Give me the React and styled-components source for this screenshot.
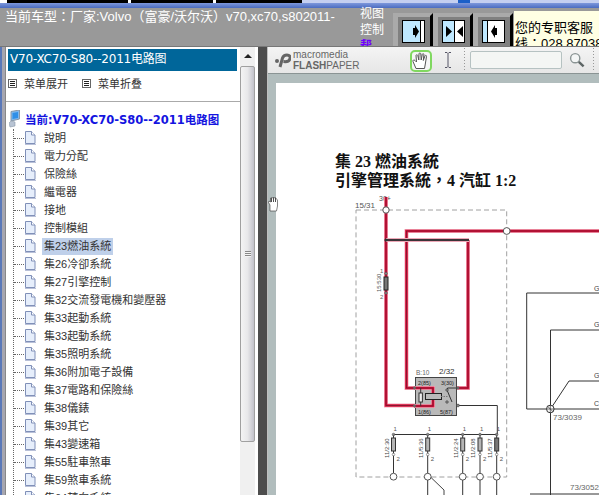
import styled, { createGlobalStyle } from 'styled-components';

const GlobalStyle = createGlobalStyle`
  html, body {
    margin: 0;
    padding: 0;
    background: #999;
    overflow: hidden;
  }
  * {
    box-sizing: border-box;
  }
`;

const cjk = `"Liberation Sans", "Noto Sans CJK TC", sans-serif`;

const treeItems = [
  '說明',
  '電力分配',
  '保險絲',
  '繼電器',
  '接地',
  '控制模組',
  '集23燃油系統',
  '集26冷卻系統',
  '集27引擎控制',
  '集32交流發電機和變壓器',
  '集33起動系統',
  '集33起動系統 ',
  '集35照明系統',
  '集36附加電子設備',
  '集37電路和保險絲',
  '集38儀錶',
  '集39其它',
  '集43變速箱',
  '集55駐車煞車',
  '集59煞車系統',
  '集64轉向系統',
];

function DocIcon() {
  return (
    <svg width="12" height="14" viewBox="0 0 12 14">
      <path d="M1.5 .5H7.5L11 4V12.5H1.5Z" fill="#e6eefb" stroke="#8090b8" />
      <path d="M7.5 .5V4H11" fill="#fff" stroke="#8090b8" />
      <path d="M1 13.5H12" stroke="#b8c0d8" />
    </svg>
  );
}

function RootIcon() {
  return (
    <svg width="12" height="18" viewBox="0 0 12 18">
      <path d="M2 1.5L10.5 0V9L2 11Z" fill="#7fb8ee" stroke="#8a98a8" />
      <path d="M3.5 3L9 2V8L3.5 9Z" fill="#2f8fe8" />
      <path d="M2 11L6 12V16L1 17L0 13Z" fill="#b8c4d4" stroke="#8a98a8" strokeWidth=".6" />
    </svg>
  );
}

function MenuIcon() {
  return (
    <svg width="9" height="9" viewBox="0 0 9 9">
      <rect x=".5" y=".5" width="8" height="8" fill="#fff" stroke="#666" />
      <path d="M2 2.5H7M2 4.5H7M2 6.5H7" stroke="#222" />
    </svg>
  );
}

function HandIcon() {
  return (
    <svg width="18" height="18" viewBox="0 0 18 18" fill="none" stroke="#555" strokeWidth="1">
      <path d="M4 16.5L1 9.5C.5 8 2 7.5 3 8.5L4.5 10L4 3.5C4 2.5 5.5 2.5 5.8 3.5L6.8 8L7 1.8C7 .7 8.7 .7 8.8 1.8L9.2 8L10.3 2.3C10.6 1.3 12 1.6 11.9 2.7L11.3 8.5L13 3.8C13.4 2.9 14.7 3.3 14.5 4.4L13.3 12L12.5 16.5Z" fill="#fff" />
    </svg>
  );
}

function LogoMark() {
  return (
    <svg width="16" height="15" viewBox="0 0 16 15">
      <circle cx="2" cy="8" r="2" fill="#666" />
      <path d="M5 14L7.5 5C8.2 3 10 2 12 2C14.5 2 15.5 3.5 15 5.5C14.5 8 12 9 8.5 8.5" fill="none" stroke="#666" strokeWidth="3" />
    </svg>
  );
}

function SearchIcon() {
  return (
    <svg width="16" height="16" viewBox="0 0 16 16">
      <circle cx="6.2" cy="6.2" r="4.6" fill="#f4f6f6" stroke="#8a9494" strokeWidth="1.4" />
      <path d="M9.8 9.8L14.6 14.4" stroke="#5c6464" strokeWidth="2.4" />
    </svg>
  );
}

function ViewIcon({ kind }) {
  return (
    <svg width="23" height="23" viewBox="0 0 23 23">
      <rect x=".5" y=".5" width="22" height="22" fill="#fff" stroke="#000" />
      {kind === 'right' && <rect x="1" y="1" width="17" height="21" fill="#bfe8ff" />}
      {kind === 'right' && <path d="M18.5 1V22" stroke="#000" />}
      {kind === 'right' && <path d="M11 8H13V5L17 11.5L13 18V15H11Z" fill="#000" />}
      {kind === 'both' && <rect x="1" y="1" width="11" height="21" fill="#bfe8ff" />}
      {kind === 'both' && <path d="M12.5 1V22" stroke="#000" />}
      {kind === 'both' && <path d="M4 6L10 11.5L4 17ZM21 6L15 11.5L21 17Z" fill="#000" />}
      {kind === 'left' && <rect x="1" y="1" width="4" height="21" fill="#bfe8ff" />}
      {kind === 'left' && <path d="M5.5 1V22" stroke="#000" />}
      {kind === 'left' && <path d="M15 8H13V5L9 11.5L13 18V15H15Z" fill="#000" />}
    </svg>
  );
}

function RedWire({ d }) {
  return (
    <>
      <path d={d} fill="none" stroke="#efa9b8" strokeWidth="4" />
      <path d={d} fill="none" stroke="#d6103a" strokeWidth="2.6" />
      <path d={d} fill="none" stroke="#5a1a28" strokeWidth=".6" />
    </>
  );
}

function GreyWire({ d }) {
  return (
    <>
      <path d={d} fill="none" stroke="#efa9b8" strokeWidth="4" />
      <path d={d} fill="none" stroke="#3b3438" strokeWidth="2" />
    </>
  );
}

const fuses = [
  { x: 393.5, label: '11/2:30', lower: false },
  { x: 427.7, label: '11/5:36', lower: true },
  { x: 462.7, label: '11/2:24', lower: true },
  { x: 480, label: '11/2:08', lower: true },
  { x: 496.7, label: '11/5:37', lower: true, dark: true },
];

function Diagram() {
  return (
    <Wiring viewBox="276 192 323 303" width="323" height="303">
      <path d="M356 210H506.7V477H356Z" fill="none" stroke="#a0a0a0" strokeDasharray="5 3" />
      <text x="379" y="201" fontSize="7" fill="#555">30+</text>
      <text x="355" y="208" fontSize="8" fill="#555">15/31</text>

      <RedWire d="M386 197V405.5H415" />
      <RedWire d="M599 231H406.5V388H416" />
      <RedWire d="M468 240V388H457" />
      <GreyWire d="M386 240H469" />
      <circle cx="386" cy="240" r="1.6" fill="#333" />

      <circle cx="386" cy="210" r="3.2" fill="#fff" stroke="#555" />
      <circle cx="506.7" cy="231" r="3.4" fill="#fff" stroke="#555" />

      <rect x="384" y="277" width="4" height="13" fill="#777" stroke="#222" />
      <circle cx="386" cy="273.5" r="1.3" fill="#888" stroke="#444" strokeWidth=".5" />
      <circle cx="386" cy="293" r="1.3" fill="#888" stroke="#444" strokeWidth=".5" />
      <text x="380" y="273" fontSize="6" fill="#666">1</text>
      <text x="380" y="299" fontSize="6" fill="#666">2</text>
      <text transform="translate(381 292) rotate(-90)" fontSize="6" fill="#555">15:530</text>

      <text x="416" y="375" fontSize="6.5" fill="#666">B:10</text>
      <text x="439" y="374" fontSize="8" fill="#333">2/32</text>
      <rect x="415.5" y="377.5" width="41" height="38" fill="#b9b9b9" stroke="#444" />
      <text x="418" y="385" fontSize="5.5" fill="#222">2(85)</text>
      <text x="441" y="385" fontSize="5.5" fill="#222">3(30)</text>
      <text x="418" y="414" fontSize="5.5" fill="#222">1(86)</text>
      <text x="440" y="414" fontSize="5.5" fill="#222">5(87)</text>

      <RedWire d="M414 388H433V406H414" />
      <path d="M420.7 388V406" stroke="#3b3438" strokeWidth="1" />
      <rect x="419" y="393" width="3.4" height="9" fill="#eee" stroke="#333" />
      <rect x="425.5" y="393.5" width="16" height="6" fill="#b9b9b9" stroke="#222" />
      <path d="M441 396.5H448" stroke="#777" strokeDasharray="1.5 1" />
      <path d="M457 388H447.5V390M447 390L452 402" fill="none" stroke="#333" />
      <circle cx="447" cy="390" r="1.3" fill="#888" stroke="#333" strokeWidth=".5" />
      <circle cx="447" cy="402" r="1.3" fill="#888" stroke="#333" strokeWidth=".5" />
      <path d="M457 405.5H497.3V434" fill="none" stroke="#333" />
      <circle cx="458" cy="388" r="1.4" fill="#666" />
      <circle cx="458" cy="405.5" r="1.4" fill="#888" stroke="#333" strokeWidth=".5" />
      <circle cx="414.5" cy="388" r="1.4" fill="#666" />
      <circle cx="414.5" cy="406" r="1.4" fill="#666" />

      <path d="M393.5 434.5H497" fill="none" stroke="#333" />
      {fuses.map((fuse) => (
        <g key={fuse.x}>
          <path d={`M${fuse.x} 434.5V${fuse.lower ? 495 : 473}`} stroke="#333" fill="none" />
          <rect x={fuse.x - 2} y="438" width="4" height="13" fill={fuse.dark ? '#777' : '#b5b5b5'} stroke="#333" />
          <circle cx={fuse.x} cy="434.5" r="1.3" fill="#888" stroke="#444" strokeWidth=".5" />
          <circle cx={fuse.x} cy="454.5" r="1.3" fill="#fff" stroke="#444" strokeWidth=".5" />
          <text x={fuse.x} y="431" fontSize="6" fill="#555">1</text>
          <text x={fuse.x + 3} y="461" fontSize="6" fill="#555">2</text>
          <text transform={`translate(${fuse.x - 5} 458) rotate(-90)`} fontSize="6" fill="#444">{fuse.label}</text>
          <circle cx={fuse.x} cy="476.7" r="3.4" fill="#fff" stroke="#555" />
        </g>
      ))}
      <path d="M431 477.5L444 490V495" fill="none" stroke="#444" />

      <path d="M599 293H526.7V409H546M554 409H599" fill="none" stroke="#333" />
      <path d="M599 330H550.5V495" fill="none" stroke="#333" />
      <path d="M552.5 406L569 381H599" fill="none" stroke="#333" />
      <path d="M530 494H599" fill="none" stroke="#333" />
      <circle cx="550.3" cy="409" r="3.8" fill="#fff" stroke="#333" />
      <path d="M546.5 409H554M550.3 405.2V412.8M547.6 406.3L553 411.7" stroke="#333" strokeWidth=".7" />
      <text x="594" y="291" fontSize="7" fill="#444">G</text>
      <text x="594" y="327" fontSize="7" fill="#444">G</text>
      <text x="594" y="378" fontSize="7" fill="#444">G</text>
      <text x="594" y="406" fontSize="7" fill="#444">C</text>
      <text x="553" y="420" fontSize="8" fill="#666">73/3039</text>
      <text x="570" y="490" fontSize="8" fill="#666">73/3052</text>
    </Wiring>
  );
}

export default function App() {
  return (
    <>
      <GlobalStyle />
      <Page>
        <TopStrip>
          <BlackRun />
          <TopGap>
            <TopMark />
          </TopGap>
        </TopStrip>
        <BlueBand />
        <Header>
          <CarModel>当前车型：厂家:Volvo（富豪/沃尔沃）v70,xc70,s802011-</CarModel>
          <ViewLabel>
            视图
            <br />
            控制
            <br />
            <HelpLink>帮</HelpLink>
          </ViewLabel>
          <ViewButtons>
            <ViewButton><ViewIcon kind="right" /></ViewButton>
            <ViewButton><ViewIcon kind="both" /></ViewButton>
            <ViewButton><ViewIcon kind="left" /></ViewButton>
          </ViewButtons>
          <ServicePanel>
            您的专职客服
            <br />
            线：028 87038
          </ServicePanel>
        </Header>
        <Main>
          <LeftEdge />
          <Sidebar>
            <TreePane>
              <TitleBar>V70-XC70-S80--2011电路图</TitleBar>
              <MenuRow>
                <MenuAction><MenuIcon />菜单展开</MenuAction>
                <MenuAction><MenuIcon />菜单折叠</MenuAction>
              </MenuRow>
              <Tree>
                <RootRow>
                  <RootIcon />
                  <RootLabel>当前:V70-XC70-S80--2011电路图</RootLabel>
                </RootRow>
                <TreeList>
                  {treeItems.map((item) => (
                    <TreeRow key={item}>
                      <Connector />
                      <DocIcon />
                      <TreeLabel $active={item === '集23燃油系統'}>{item}</TreeLabel>
                    </TreeRow>
                  ))}
                </TreeList>
              </Tree>
            </TreePane>
            <ScrollBar>
              <ScrollUp />
              <ScrollThumb>
                <ThumbGrip />
              </ScrollThumb>
            </ScrollBar>
          </Sidebar>
          <Divider />
          <Viewer>
            <Toolbar>
              <Logo>
                <LogoMark />
                <LogoText>
                  <LogoTop>macromedia</LogoTop>
                  <LogoBottom>FLASH<LogoLight>PAPER</LogoLight></LogoBottom>
                </LogoText>
              </Logo>
              <HandButton><HandIcon /></HandButton>
              <TextCursor>
                <svg width="8" height="16" viewBox="0 0 8 16">
                  <path d="M1 .5H3L4 1.5L5 .5H7M4 1.5V14.5M1 15.5H3L4 14.5L5 15.5H7" fill="none" stroke="#556" />
                </svg>
              </TextCursor>
              <ToolDivider />
              <SearchField />
              <SearchButton><SearchIcon /></SearchButton>
              <ToolDivider />
            </Toolbar>
            <Sheet>
              <PaperTitle>
                集 23 燃油系統
                <br />
                引擎管理系統，4 汽缸 1:2
              </PaperTitle>
              <Diagram />
            </Sheet>
          </Viewer>
          <GrabCursor>
            <svg width="10" height="16" viewBox="0 0 10 16">
              <path d="M2 15V9L.5 6.5L1 5L2.5 6V2L3.5 1.5L4.5 2L5.5 1L6.5 2L7.5 1.5L8.5 3L9.5 4V10L8.5 15Z" fill="#fff" stroke="#333" strokeWidth=".6" />
              <path d="M3.5 2V6M5.5 1.5V6M7.5 2V6" stroke="#222" strokeWidth=".8" />
            </svg>
          </GrabCursor>
        </Main>
      </Page>
    </>
  );
}

const Page = styled.div`
  position: relative;
  width: 599px;
  height: 495px;
  overflow: hidden;
  display: flex;
  flex-direction: column;
  background: #999;
  font-family: ${cjk};
`;

const TopStrip = styled.div`
  display: flex;
  height: 3px;
  flex: none;
`;

const BlackRun = styled.div`
  width: 302px;
  background: linear-gradient(90deg, #fff 0 7px, #000 7px 128px, #fff 128px 131px, #000 131px 213px, #fff 213px 216px, #000 216px);
`;

const TopGap = styled.div`
  flex: 1;
  padding-left: 156px;
  background: #c4cff0;
`;

const TopMark = styled.div`
  width: 12px;
  height: 3px;
  background: #1a5fc8;
`;

const BlueBand = styled.div`
  height: 5px;
  flex: none;
  background: linear-gradient(#7d97dc, #4a6cc0);
`;

const Header = styled.div`
  display: flex;
  height: 38px;
  flex: none;
  background: #999;
  color: #fff;
`;

const CarModel = styled.div`
  width: 360px;
  padding: 1px 0 0 5px;
  font-size: 13px;
  line-height: 16px;
  white-space: nowrap;
  overflow: hidden;
`;

const ViewLabel = styled.div`
  width: 33px;
  height: 40px;
  margin-top: -2px;
  overflow: hidden;
  font-size: 12px;
  line-height: 16px;
`;

const HelpLink = styled.span`
  color: #7000ff;
  font-weight: 700;
`;

const ViewButtons = styled.div`
  display: flex;
  padding-top: 5px;
`;

const ViewButton = styled.div`
  position: relative;
  width: 40px;
  height: 33px;
  padding: 3px 0 0 4px;
  background: #808080;
  border-top: 4px solid #aaa;
  border-left: 5px solid #aaa;

  &::after {
    content: '';
    position: absolute;
    top: -4px;
    right: 0;
    width: 3px;
    height: 33px;
    background: #000;
    clip-path: polygon(0 3px, 100% 0, 100% 100%, 0 100%);
  }
`;

const ServicePanel = styled.div`
  width: 85px;
  height: 35px;
  margin: 3px 0 0 1px;
  padding: 9px 0 0 1px;
  overflow: hidden;
  background: #ffffe3;
  color: #000;
  font-size: 13px;
  line-height: 16px;
  white-space: nowrap;
`;

const Main = styled.div`
  position: relative;
  display: flex;
  flex: 1;
  min-height: 0;
  border-top: 1px solid #777;
`;

const LeftEdge = styled.div`
  width: 6px;
  flex: none;
  background: linear-gradient(90deg, #5a78b8 0 2px, #a6a6b0 2px);
  border-right: 1px solid #888;
`;

const Sidebar = styled.div`
  display: flex;
  width: 252px;
  flex: none;
  background: #fff;
`;

const TreePane = styled.div`
  width: 234px;
  flex: none;
  padding: 2px 0 0 2px;
  overflow: hidden;
`;

const TitleBar = styled.div`
  width: 229px;
  height: 22px;
  padding-left: 2px;
  background: #00669a;
  color: #fff;
  font-size: 12px;
  font-family: "DejaVu Sans", "Noto Sans CJK SC", sans-serif;
  letter-spacing: -0.2px;
  line-height: 21px;
  white-space: nowrap;
`;

const MenuRow = styled.div`
  display: flex;
  gap: 14px;
  height: 31px;
  margin-left: -2px;
  padding: 0 0 6px 2px;
  align-items: center;
  border-bottom: 1px solid #aaa;
`;

const MenuAction = styled.div`
  display: flex;
  align-items: center;
  gap: 7px;
  color: #333;
  font-size: 11px;
  font-family: "Noto Sans CJK SC", sans-serif;
`;

const Tree = styled.div`
  padding: 7px 0 0 1px;
`;

const RootRow = styled.div`
  display: flex;
  align-items: center;
  gap: 4px;
  height: 20px;
`;

const RootLabel = styled.span`
  color: #1414e0;
  font-size: 11.5px;
  font-weight: 700;
  font-family: "DejaVu Sans", "Noto Sans CJK SC", sans-serif;
  white-space: nowrap;
`;

const TreeList = styled.div`
  margin-left: 4px;
  border-left: 1px dotted #666;
`;

const TreeRow = styled.div`
  display: flex;
  align-items: center;
  height: 18px;
`;

const Connector = styled.span`
  width: 10px;
  flex: none;
  border-top: 1px dotted #666;
`;

const TreeLabel = styled.span`
  margin-left: 6px;
  padding: 0 2px;
  color: #333;
  font-size: 11px;
  font-family: "Liberation Sans", "Noto Sans CJK TC", sans-serif;
  line-height: 17px;
  white-space: nowrap;
  background: ${(props) => (props.$active ? '#bfd0ea' : 'transparent')};
`;

const ScrollBar = styled.div`
  width: 15px;
  flex: none;
  background: #f0f0f0;
`;

const ScrollUp = styled.div`
  position: relative;
  height: 19px;
  background: #f0f0f0;

  &::after {
    content: '';
    position: absolute;
    left: 4px;
    top: 7px;
    border-left: 4px solid transparent;
    border-right: 4px solid transparent;
    border-bottom: 4px solid #222;
  }
`;

const ScrollThumb = styled.div`
  display: flex;
  align-items: center;
  justify-content: center;
  height: 376px;
  background: linear-gradient(90deg, #f4f4f4, #e8e8ea 50%, #c2c2ca);
  border: 1px solid #a0a0a0;
  border-radius: 2px;
`;

const ThumbGrip = styled.div`
  width: 6px;
  height: 6px;
  background: repeating-linear-gradient(#888 0 1px, #f4f4f4 1px 2px);
`;

const Divider = styled.div`
  width: 10px;
  flex: none;
  background: linear-gradient(90deg, #4d4d4d 0 9px, #c0c0c0 9px);
`;

const Viewer = styled.div`
  display: flex;
  flex-direction: column;
  flex: 1;
  min-width: 0;
  background: #b1bdbd;
`;

const Toolbar = styled.div`
  display: flex;
  align-items: center;
  height: 27px;
  flex: none;
  background: linear-gradient(#f4f4f4, #e6e6e6);
  border-bottom: 1px solid #8a9494;
`;

const Logo = styled.div`
  display: flex;
  align-items: center;
  gap: 2px;
  width: 143px;
  padding-left: 7px;
  color: #666;
`;

const LogoText = styled.div`
  display: flex;
  flex-direction: column;
  gap: 1px;
  font-family: "Liberation Sans", sans-serif;
`;

const LogoTop = styled.span`
  font-size: 10px;
  line-height: 10px;
`;

const LogoBottom = styled.span`
  font-size: 10px;
  font-weight: 700;
  line-height: 10px;
`;

const LogoLight = styled.span`
  font-weight: 400;
`;

const HandButton = styled.div`
  display: flex;
  align-items: center;
  justify-content: center;
  width: 22px;
  height: 22px;
  margin-top: 1px;
  background: #f6f6f6;
  border: 2px solid #80d860;
  border-radius: 5px;
`;

const TextCursor = styled.div`
  display: flex;
  justify-content: center;
  width: 33px;
`;

const ToolDivider = styled.div`
  width: 1px;
  height: 24px;
  margin-right: 5px;
  background-image: repeating-linear-gradient(#999 0 1px, transparent 1px 3px);
`;

const SearchField = styled.div`
  width: 93px;
  height: 18px;
  background: #f4f6f4;
  border: 1px solid #b6c2c2;
  border-radius: 2px;
`;

const SearchButton = styled.div`
  display: flex;
  width: 31px;
  padding-left: 7px;
`;

const Sheet = styled.div`
  flex: 1;
  margin: 9px 0 0 8px;
  padding-top: 69px;
  overflow: hidden;
  background: #fff;
`;

const PaperTitle = styled.div`
  height: 40px;
  padding-left: 59px;
  color: #111;
  font-family: "Liberation Serif", "Noto Sans CJK TC", serif;
  font-size: 16px;
  font-weight: 700;
  line-height: 19px;
  white-space: nowrap;
`;

const Wiring = styled.svg`
  display: block;
  font-family: "Liberation Sans", sans-serif;
`;

const GrabCursor = styled.div`
  position: absolute;
  left: 268px;
  top: 149px;
  line-height: 0;
`;
